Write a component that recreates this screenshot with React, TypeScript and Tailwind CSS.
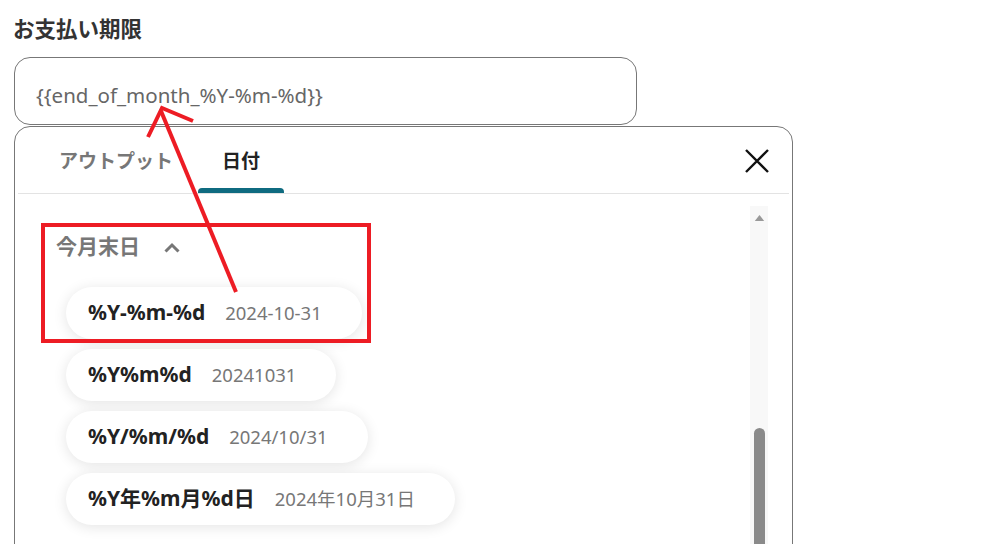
import React from 'react';

const formats = [
  { label: '%Y-%m-%d', sample: '2024-10-31' },
  { label: '%Y%m%d', sample: '20241031' },
  { label: '%Y/%m/%d', sample: '2024/10/31' },
  { label: '%Y年%m月%d日', sample: '2024年10月31日' },
];

const FormatPill: React.FC<{ label: string; sample: string }> = ({ label, sample }) => (
  <div className="flex h-[52px] w-fit items-center gap-[20px] rounded-full bg-white pl-[22px] pr-[40px] shadow-[0_2px_14px_rgba(0,0,0,0.11)]">
    <span className="text-[21px] font-bold text-[#222]">{label}</span>
    <span className="text-[18.5px] text-[#777]">{sample}</span>
  </div>
);

export default function App() {
  return (
    <div className="relative h-[544px] w-[996px] overflow-hidden bg-white pl-[14px] pt-[15px] font-['Noto_Sans','Noto_Sans_CJK_JP',sans-serif]">
      {/* Field label */}
      <h2 className="-ml-[1px] text-[21.5px] font-bold leading-[27px] text-[#333]">お支払い期限</h2>

      {/* Input */}
      <div className="mt-[15px] flex h-[68px] w-[623px] items-center rounded-[16px] border border-[#777] pl-[21px] pt-[8px] text-[20.5px] text-[#666]">
        {'{{end_of_month_%Y-%m-%d}}'}
      </div>

      {/* Picker panel */}
      <div className="mt-[1px] h-[440px] w-[779px] rounded-t-[16px] border border-[#777] px-[3px]">
        {/* Tabs */}
        <div className="flex h-[67px] items-stretch border-b border-[#e3e3e3] pl-[17px]">
          <button className="flex items-center px-[24px] pt-[2px] text-[19px] font-bold text-[#777]">
            アウトプット
          </button>
          <button className="relative ml-[1px] flex items-center px-[24px] pt-[2px] text-[19px] font-bold text-[#222]">
            日付
            <span className="absolute bottom-0 left-0 right-0 h-[5px] rounded-t-[4px] bg-[#0f6b80]" />
          </button>
          <button className="ml-auto mr-[20px] flex items-center pt-[2px]">
            <svg width="24" height="24" viewBox="0 0 24 24" fill="none" stroke="#111" strokeWidth="2.4">
              <path d="M1 1L23 23M23 1L1 23" />
            </svg>
          </button>
        </div>

        {/* Content */}
        <div className="flex">
          <div className="flex-1 pl-[38px] pt-[39px]">
            <div className="flex h-[28px] items-center gap-[24px] text-[21px] font-bold text-[#777]">
              今月末日
              <svg width="16" height="11" viewBox="0 0 16 11" fill="none" stroke="#777" strokeWidth="3">
                <path d="M1.5 9.5L8 3L14.5 9.5" />
              </svg>
            </div>
            <div className="mt-[26px] flex flex-col gap-[10px] pl-[10px]">
              {formats.map((f) => (
                <FormatPill key={f.label} label={f.label} sample={f.sample} />
              ))}
            </div>
          </div>

          {/* Scrollbar */}
          <div className="mr-[21px] mt-[12px] flex h-[400px] w-[18px] flex-col items-center bg-[#f8f8f8]">
            <svg className="mt-[9px]" width="11" height="7" viewBox="0 0 11 7">
              <path d="M5.5 0L11 7H0Z" fill="#999" />
            </svg>
            <div className="mt-[207px] h-[200px] w-[11px] rounded-full bg-[#8a8a8a]" />
          </div>
        </div>
      </div>

      {/* Annotation overlay */}
      <svg className="pointer-events-none absolute left-0 top-0" width="996" height="544" viewBox="0 0 996 544" fill="none">
        <rect x="43" y="225" width="326" height="116" stroke="#ed1c24" strokeWidth="4" />
        <path d="M236 292L161 111" stroke="#ed1c24" strokeWidth="4" />
        <path d="M148 137L162 108L193 121" stroke="#ed1c24" strokeWidth="4" />
      </svg>
    </div>
  );
}
